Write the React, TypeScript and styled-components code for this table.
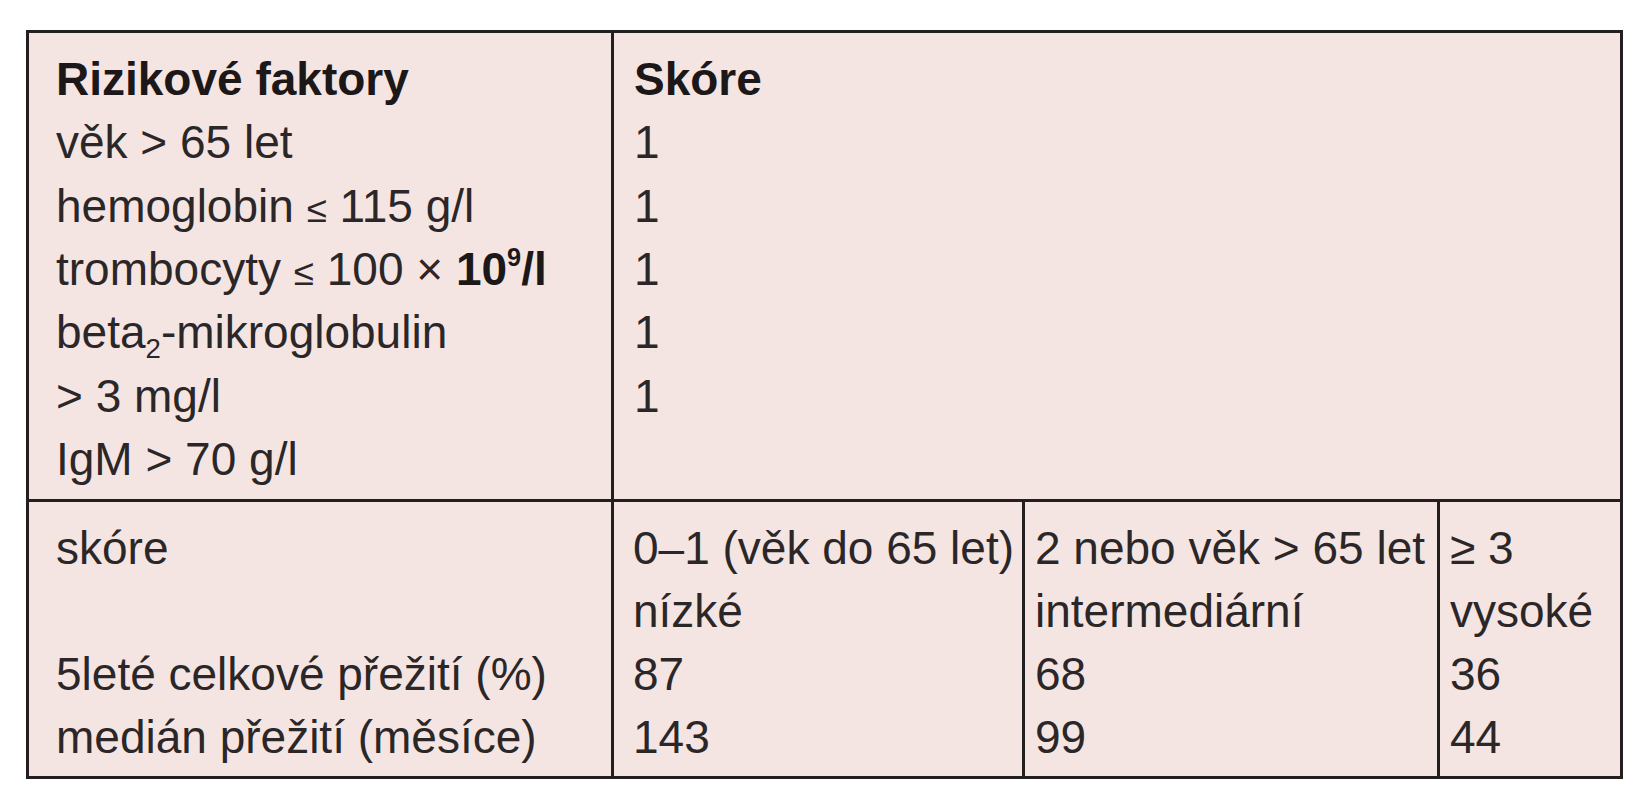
import React from 'react';
import styled, { createGlobalStyle } from 'styled-components';

const GlobalStyle = createGlobalStyle`
  html, body {
    margin: 0;
    padding: 0;
    background: #ffffff;
  }
  body {
    font-family: "Liberation Sans", Arial, sans-serif;
    color: #2b2728;
  }
`;

const Page = styled.div`
  padding: 30px 0 0 26px;
`;

const Table = styled.div`
  display: grid;
  grid-template-columns: 582px 411px 415px 183px;
  width: max-content;
  border: 3px solid #231f20;
  background: #f5e5e2;
  font-size: 46px;
`;

type CellProps = {
  $span?: number;
  $padLeft: number;
  $divider?: boolean;
  $bottom?: boolean;
};

const Cell = styled.div<CellProps>`
  grid-column: span ${(p) => p.$span ?? 1};
  padding-left: ${(p) => p.$padLeft}px;
  padding-top: ${(p) => (p.$bottom ? 15 : 15)}px;
  padding-bottom: ${(p) => (p.$bottom ? 7 : 7.7)}px;
  line-height: ${(p) => (p.$bottom ? 63 : 63.33)}px;
  border-left: ${(p) => (p.$divider ? '3px solid #231f20' : 'none')};
  border-top: ${(p) => (p.$bottom ? '3px solid #231f20' : 'none')};
  white-space: nowrap;
`;

const Line = styled.div`
  height: 1lh;
`;

const Heading = styled.div`
  font-weight: 700;
  color: #1c1819;
  height: 1lh;
`;

const Strong = styled.span`
  font-weight: 700;
  color: #1c1819;
`;

const Small = styled.span`
  font-size: 0.8em;
`;

const Sup = styled.sup`
  font-size: 0.55em;
  vertical-align: 0.75em;
  line-height: 0;
`;

const Sub = styled.sub`
  font-size: 0.6em;
  vertical-align: -0.35em;
  line-height: 0;
`;

const factors: React.ReactNode[] = [
  'věk > 65 let',
  <>
    hemoglobin <Small>≤</Small> 115 g/l
  </>,
  <>
    trombocyty <Small>≤</Small> 100 × <Strong>10<Sup>9</Sup>/l</Strong>
  </>,
  <>
    beta<Sub>2</Sub>-mikroglobulin
  </>,
  '> 3 mg/l',
  'IgM > 70 g/l',
];

const scores = ['1', '1', '1', '1', '1', ''];

const groups = [
  { pad: 19, lines: ['0–1 (věk do 65 let)', 'nízké', '87', '143'] },
  { pad: 10, lines: ['2 nebo věk > 65 let', 'intermediární', '68', '99'] },
  { pad: 10, lines: ['≥ 3', 'vysoké', '36', '44'] },
];

const App: React.FC = () => {
  return (
    <>
      <GlobalStyle />
      <Page>
        <Table>
          <Cell $padLeft={27}>
            <Heading>Rizikové faktory</Heading>
            {factors.map((f, i) => (
              <Line key={i}>{f}</Line>
            ))}
          </Cell>
          <Cell $span={3} $padLeft={20} $divider>
            <Heading>Skóre</Heading>
            {scores.map((s, i) => (
              <Line key={i}>{s}</Line>
            ))}
          </Cell>

          <Cell $padLeft={27} $bottom>
            <Line>skóre</Line>
            <Line />
            <Line>5leté celkové přežití (%)</Line>
            <Line>medián přežití (měsíce)</Line>
          </Cell>
          {groups.map((g, i) => (
            <Cell key={i} $padLeft={g.pad} $divider $bottom>
              {g.lines.map((l, j) => (
                <Line key={j}>{l}</Line>
              ))}
            </Cell>
          ))}
        </Table>
      </Page>
    </>
  );
};

export default App;
